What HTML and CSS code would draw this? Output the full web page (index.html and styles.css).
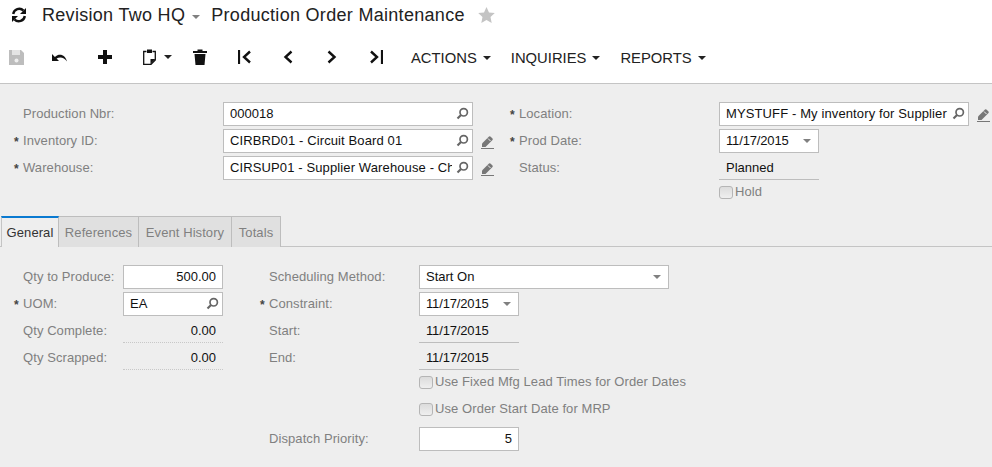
FILE: index.html
```html
<!DOCTYPE html>
<html lang="en">
<head>
<meta charset="utf-8">
<title>Production Order Maintenance</title>
<link rel="stylesheet" href="styles.css">
</head>
<body>
<svg class="sprites" width="0" height="0" aria-hidden="true">
  <symbol id="search" viewBox="0 0 13 13"><circle cx="7.7" cy="5.300" r="3.700" fill="none" stroke="currentColor" stroke-width="1.700"/><path d="M5 8 1.500 11.500" stroke="currentColor" stroke-width="2.200" fill="none"/></symbol>
  <symbol id="pencil" viewBox="0 0 13 14"><path d="M1 8.500 8 1.500a1 1 0 0 1 1.400 0l2.100 2.100a1 1 0 0 1 0 1.400L4.500 12H1Z" fill="currentColor"/><path d="M7 3.500 9.500 6" stroke="#eee" fill="none"/><path d="M0 13.500h13" stroke="currentColor" fill="none"/></symbol>
</svg>
<header class="header">
  <div class="title-row">
    <svg class="refresh" width="16" height="16" viewBox="0 0 16 16"><path d="M2.200 7A6 6 0 0 1 12.500 3.600" fill="none" stroke="#111" stroke-width="2.400"/><path d="M15 1v6h-6Z" fill="#111"/><path d="M13.800 9A6 6 0 0 1 3.500 12.400" fill="none" stroke="#111" stroke-width="2.400"/><path d="M1 15V9h6Z" fill="#111"/></svg>
    <span class="company">Revision Two HQ</span>
    <span class="caret caret-grey caret-title"></span>
    <span class="screen">Production Order Maintenance</span>
    <svg class="star" width="17" height="16" viewBox="0 0 17 16"><path d="M8.500 0 11 5.400l5.800.7-4.300 4 1.200 5.800-5.200-2.900-5.200 2.900 1.200-5.800-4.300-4L6 5.400Z" fill="#c4c4c4"/></svg>
  </div>
  <div class="toolbar">
    <span class="tool tool-save"><svg width="15" height="15" viewBox="0 0 15 15"><path d="M0 0h12l3 3v12H0Z" fill="#bdbdbd"/><path d="M3 0h8v5H3Z" fill="#e4e4e4"/><circle cx="7.500" cy="10.500" r="2" fill="#eee"/></svg></span>
    <span class="tool"><svg width="16" height="9" viewBox="0 0 16 9"><path d="M0 1v7h7L4.600 5.600C7.500 3.600 12 3.800 15 8.500 13.500 2.500 8 -.5 2.900 3.900Z" fill="#111"/></svg></span>
    <span class="tool tool-plus"><svg width="14" height="14" viewBox="0 0 14 14"><path d="M5 0h4v5h5v4H9v5H5V9H0V5h5Z" fill="#111"/></svg></span>
    <span class="tool tool-paste"><svg width="13" height="16" viewBox="0 0 13 16"><path d="M3.500 2.500H.7v12.800h7.300l4.300-4.300V2.500H9.500" fill="none" stroke="#111" stroke-width="1.300"/><path d="M4 .5h5v3.500H4Z" fill="#111"/><path d="M7.500 15v-5h5" fill="#111"/></svg><span class="caret caret-paste"></span></span>
    <span class="tool"><svg width="14" height="16" viewBox="0 0 14 16"><path d="M0 2h4.500V.5h5V2H14v2H0ZM1.500 5h11l-1 11h-9Z" fill="#111"/></svg></span>
    <span class="tool"><svg width="13" height="14" viewBox="0 0 13 14"><path d="M1 0v14" stroke="#111" stroke-width="2.200" fill="none"/><path d="M12 1.500 6 7l6 5.500" stroke="#111" stroke-width="2.400" fill="none"/></svg></span>
    <span class="tool"><svg width="10" height="14" viewBox="0 0 10 14"><path d="M8.500 1.500 2.500 7l6 5.500" stroke="#111" stroke-width="2.400" fill="none"/></svg></span>
    <span class="tool"><svg width="10" height="14" viewBox="0 0 10 14"><path d="M1.500 1.500 7.500 7l-6 5.500" stroke="#111" stroke-width="2.400" fill="none"/></svg></span>
    <span class="tool"><svg width="13" height="14" viewBox="0 0 13 14"><path d="M12 0v14" stroke="#111" stroke-width="2.200" fill="none"/><path d="M1 1.500 7 7l-6 5.500" stroke="#111" stroke-width="2.400" fill="none"/></svg></span>
    <span class="menu menu-first">ACTIONS<span class="caret"></span></span>
    <span class="menu">INQUIRIES<span class="caret"></span></span>
    <span class="menu">REPORTS<span class="caret"></span></span>
  </div>
</header>
<main class="page">
  <section class="form form-top">
    <div class="col col-a">
      <div class="row"><span class="mark"></span><span class="label">Production Nbr:</span><div class="box"><span class="val">000018</span><svg class="ico"><use href="#search"/></svg></div></div>
      <div class="row"><span class="mark">*</span><span class="label">Inventory ID:</span><div class="box"><span class="val wide">CIRBRD01 - Circuit Board 01</span><svg class="ico"><use href="#search"/></svg></div><svg class="pen"><use href="#pencil"/></svg></div>
      <div class="row"><span class="mark">*</span><span class="label">Warehouse:</span><div class="box"><span class="val wide">CIRSUP01 - Supplier Warehouse - Chicago</span><svg class="ico"><use href="#search"/></svg></div><svg class="pen"><use href="#pencil"/></svg></div>
    </div>
    <div class="col col-b">
      <div class="row"><span class="mark">*</span><span class="label">Location:</span><div class="box"><span class="val wide">MYSTUFF - My inventory for Supplier</span><svg class="ico"><use href="#search"/></svg></div><svg class="pen"><use href="#pencil"/></svg></div>
      <div class="row"><span class="mark">*</span><span class="label">Prod Date:</span><div class="box box-s"><span class="val tight">11/17/2015</span><span class="caret caret-grey"></span></div></div>
      <div class="row"><span class="mark"></span><span class="label">Status:</span><div class="plain box-s"><span class="val">Planned</span></div></div>
      <div class="row"><span class="mark"></span><span class="label"></span><span class="check"></span><span class="check-text">Hold</span></div>
    </div>
  </section>
  <nav class="tabs">
    <span class="tab tab-on">General</span><span class="tab tab-refs">References</span><span class="tab tab-hist">Event History</span><span class="tab tab-tot">Totals</span>
  </nav>
  <section class="form form-bottom">
    <div class="col col-c">
      <div class="row"><span class="mark"></span><span class="label">Qty to Produce:</span><div class="box box-s num"><span class="val">500.00</span></div></div>
      <div class="row"><span class="mark">*</span><span class="label">UOM:</span><div class="box box-s"><span class="val">EA</span><svg class="ico"><use href="#search"/></svg></div></div>
      <div class="row"><span class="mark"></span><span class="label">Qty Complete:</span><div class="plain dotted box-s num"><span class="val">0.00</span></div></div>
      <div class="row"><span class="mark"></span><span class="label">Qty Scrapped:</span><div class="plain dotted box-s num"><span class="val">0.00</span></div></div>
    </div>
    <div class="col col-d">
      <div class="row"><span class="mark"></span><span class="label">Scheduling Method:</span><div class="box"><span class="val">Start On</span><span class="caret caret-grey"></span></div></div>
      <div class="row"><span class="mark">*</span><span class="label">Constraint:</span><div class="box box-s"><span class="val tight">11/17/2015</span><span class="caret caret-grey"></span></div></div>
      <div class="row"><span class="mark"></span><span class="label">Start:</span><div class="plain box-s"><span class="val tight">11/17/2015</span></div></div>
      <div class="row"><span class="mark"></span><span class="label">End:</span><div class="plain box-s"><span class="val tight">11/17/2015</span></div></div>
      <div class="row"><span class="mark"></span><span class="label"></span><span class="check"></span><span class="check-text">Use Fixed Mfg Lead Times for Order Dates</span></div>
      <div class="row"><span class="mark"></span><span class="label"></span><span class="check"></span><span class="check-text">Use Order Start Date for MRP</span></div>
      <div class="row"><span class="mark"></span><span class="label">Dispatch Priority:</span><div class="box box-s num"><span class="val">5</span></div></div>
    </div>
  </section>
</main>
</body>
</html>
```
FILE: styles.css
```css
* { box-sizing: border-box; }
html, body { margin: 0; height: 100%; }
body {
  background: #eeeeee;
  font-family: "Liberation Sans", Arial, sans-serif;
  font-size: 13px;
  letter-spacing: .08px;
  color: #111;
  overflow: hidden;
}
.sprites { display: block; height: 0; }
.header {
  background: #fff;
  height: 84px;
  border-bottom: 1px solid #c4c4c4;
}
.title-row {
  display: flex;
  align-items: center;
  height: 30px;
  padding-left: 11px;
  font-size: 18px;
  letter-spacing: .3px;
  color: #222;
}
.company { margin-left: 15px; }
.caret-title { margin: 3px 11px 0 7px; }
.star { margin-left: 13px; }
.toolbar {
  display: flex;
  align-items: center;
  height: 54px;
}
.tool {
  display: flex;
  align-items: center;
  justify-content: center;
  width: 44px;
  height: 30px;
  flex: none;
}
.tool-save { width: 32px; margin-right: 6px; }
.tool-plus { padding-left: 1px; }
.tool-paste { width: 52px; justify-content: flex-start; padding-left: 17px; }
.caret {
  display: inline-block;
  width: 0;
  height: 0;
  flex: none;
  border-left: 4px solid transparent;
  border-right: 4px solid transparent;
  border-top: 4px solid #222;
}
.caret-grey { border-top-color: #808080; }
.caret-paste { margin-left: 8px; }
.menu {
  display: flex;
  align-items: center;
  padding-top: 2px;
  font-size: 14.8px;
  letter-spacing: 0;
  color: #222;
  margin-left: 20px;
}
.menu .caret { margin-left: 6px; }
.menu-first { margin-left: 13px; }
.form { display: flex; padding-left: 14px; padding-top: 18px; }
.col { flex: none; }
.col-a { width: 496px; }
.col-c { width: 246px; }
.form-top { height: 132px; }
.row {
  display: flex;
  align-items: flex-start;
  height: 27px;
}
.mark {
  width: 9px;
  flex: none;
  color: #444;
  font-size: 12px;
  font-weight: bold;
  line-height: 26px;
}
.label {
  width: 200px;
  flex: none;
  color: #808080;
  line-height: 23px;
  white-space: nowrap;
}
.col-c .label { width: 100px; }
.col-d .label { width: 150px; }
.box, .plain {
  display: flex;
  align-items: center;
  width: 250px;
  height: 24px;
  padding: 0 7px;
  flex: none;
  color: #111;
}
.box {
  background: #fff;
  border: 1px solid #bdbdbd;
  padding: 0 6px 1px;
}
.box-s { width: 100px; }
.plain { border-bottom: 1px solid #bdbdbd; }
.plain.dotted { border-bottom: 1px dotted #c8c8c8; }
.val {
  flex: 1;
  min-width: 0;
  overflow: hidden;
  white-space: nowrap;
  letter-spacing: 0;
}
.wide { letter-spacing: .12px; }
.tight { letter-spacing: -.15px; }
.num .val { text-align: right; }
.ico {
  width: 13px;
  height: 13px;
  flex: none;
  margin-left: 4px;
  margin-right: -3px;
  color: #666;
}
.box .caret { margin-right: 1px; margin-left: 5px; }
.pen {
  width: 13px;
  height: 14px;
  margin: 6px 0 0 8px;
  color: #777;
  flex: none;
}
.check {
  width: 14px;
  height: 13px;
  margin-top: 3px;
  flex: none;
  border: 1px solid #b5b5b5;
  border-radius: 3px;
  background: linear-gradient(#dcdcdc, #efefef);
}
.check-text {
  margin-left: 2px;
  color: #808080;
  line-height: 18px;
  white-space: nowrap;
}
.tabs {
  display: flex;
  height: 31px;
  padding-left: 1px;
  border-bottom: 1px solid #c4c4c4;
}
.tab {
  width: 80px;
  height: 31px;
  padding-top: 8px;
  line-height: 15px;
  text-align: center;
  background: #e0e0e0;
  border: 1px solid #bdbdbd;
  border-left: 0;
  border-bottom: 0;
  color: #808080;
  white-space: nowrap;
}
.tab-hist { width: 93px; }
.tab-tot { width: 49px; }
.tab-on {
  width: 58px;
  background: #eeeeee;
  color: #333;
  border-top: 2px solid #0a7ad1;
  border-left: 1px solid #c4c4c4;
  padding-top: 7px;
}
```
